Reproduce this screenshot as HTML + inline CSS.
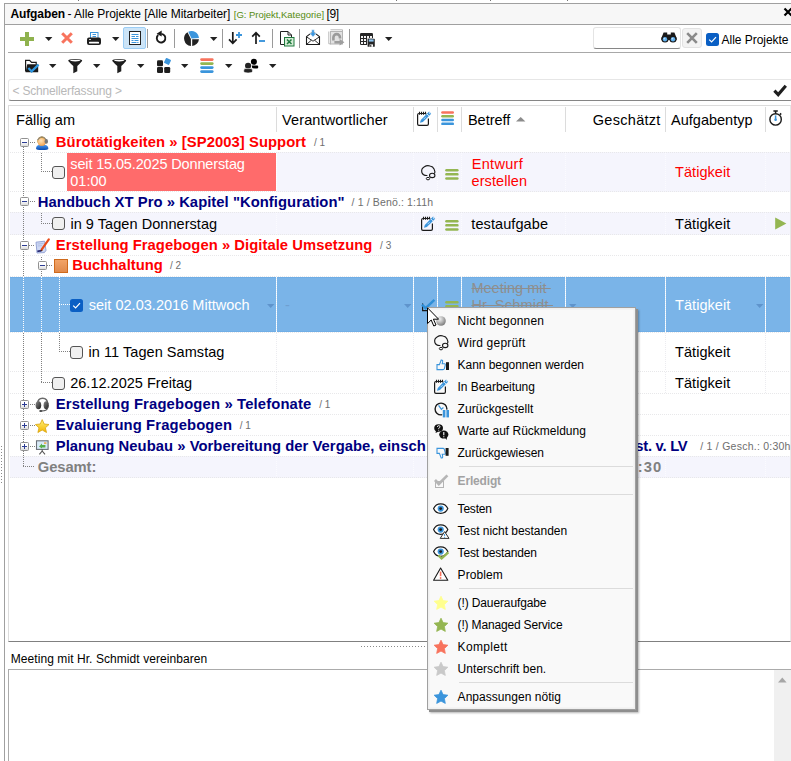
<!DOCTYPE html>
<html>
<head>
<meta charset="utf-8">
<title>Aufgaben</title>
<style>
html,body{margin:0;padding:0;}
body{width:791px;height:761px;background:#fff;overflow:hidden;position:relative;font-family:"Liberation Sans",sans-serif;font-size:14.5px;color:#000;}
.abs{position:absolute;}
.t{position:absolute;white-space:pre;line-height:1;}
svg{position:absolute;overflow:visible;}
.cb{position:absolute;width:11px;height:11px;border:1px solid #555;border-radius:3px;background:#f0f0f0;}
.exp{position:absolute;width:7px;height:7px;border:1px solid #919191;border-radius:1.5px;background:linear-gradient(#fff 40%,#dcdcdc);}
.exp:before{content:"";position:absolute;left:1px;top:3px;width:5px;height:1px;background:#2c3c94;}
.exp.plus:after{content:"";position:absolute;left:3px;top:1px;width:1px;height:5px;background:#2c3c94;}
</style>
</head>
<body>
<div class="abs" style="left:4px;top:3px;width:1px;height:758px;background:#a0a0a0;"></div>
<div class="abs" style="left:4px;top:3px;width:787px;height:1px;background:#a0a0a0;"></div>
<div class="abs" style="left:5px;top:4px;width:786px;height:20px;background:#f7f7f7;"></div>
<div class="abs" style="left:5px;top:24px;width:786px;height:1px;background:#a0a0a0;"></div>
<div class="abs" style="left:8px;top:52px;width:783px;height:1px;background:#a8a8a8;"></div>
<div class="abs" style="left:78px;top:0px;width:1px;height:1px;background:#777;"></div>
<div class="abs" style="left:396px;top:0px;width:1px;height:1px;background:#777;"></div>
<div class="abs" style="left:490px;top:0px;width:1px;height:1px;background:#777;"></div>
<div class="abs" style="left:567px;top:0px;width:1px;height:1px;background:#777;"></div>
<div class="t" style="left:10.4px;top:8px;font-size:12px;font-weight:bold;letter-spacing:-0.089px;">Aufgaben</div>
<div class="t" style="left:67.5px;top:8px;font-size:12px;letter-spacing:-0.038px;">- Alle Projekte [Alle Mitarbeiter]</div>
<div class="t" style="left:233.8px;top:10px;font-size:9.5px;color:#558b10;letter-spacing:-0.028px;">[G: Projekt,Kategorie]</div>
<div class="t" style="left:326.6px;top:8px;font-size:12px;letter-spacing:-0.462px;">[9]</div>
<svg style="left:784px;top:8px" width="8" height="8" viewBox="0 0 8 8"><path d="M0.5 0.5 L7.5 7.5 M7.5 0.5 L0.5 7.5" stroke="#000" stroke-width="2.2"/></svg>
<svg style="left:20px;top:32px" width="14" height="14" viewBox="0 0 14 14"><path d="M5 0h4v5h5v4h-5v5h-4v-5h-5v-4h5z" fill="#8fb24e"/></svg>
<svg style="left:45px;top:37px" width="8" height="4" viewBox="0 0 8 4"><path d="M0 0 H7.4 L3.7 4 Z" fill="#222"/></svg>
<svg style="left:61px;top:32px" width="12" height="12" viewBox="0 0 12 12"><path d="M1.2 1.2 L10.8 10.8 M10.8 1.2 L1.2 10.8" stroke="#f8735d" stroke-width="3" fill="none"/></svg>
<svg style="left:87px;top:32px" width="15" height="14" viewBox="0 0 15 14"><rect x="3.5" y="0.5" width="7.5" height="6" fill="#fff" stroke="#3b95dc" stroke-width="1"/><path d="M5.5 2.5h3.5M5.5 4.5h3.5" stroke="#3b95dc" stroke-width="1"/><rect x="0" y="5.5" width="14" height="7.5" rx="2" fill="#1e1e1e"/><rect x="2" y="9.8" width="10" height="1.8" rx="0.6" fill="#fff"/><rect x="2" y="7" width="2" height="1" fill="#ccc"/></svg>
<svg style="left:112px;top:37px" width="8" height="4" viewBox="0 0 8 4"><path d="M0 0 H7.4 L3.7 4 Z" fill="#222"/></svg>
<div class="abs" style="left:123px;top:27px;width:23px;height:22px;box-sizing:border-box;background:#cce4f7;border:1px solid #9bcdf5;border-radius:2px;"></div>
<svg style="left:129px;top:31px" width="12" height="14" viewBox="0 0 12 14"><rect x="0.5" y="0.5" width="11" height="13" fill="#fff" stroke="#222" stroke-width="1"/><path d="M2.5 3.5h7M2.5 5.5h3.5M7 5.5h2.5M2.5 7.5h7M2.5 9.5h2M5.5 9.5h4M2.5 11.5h5M8.2 11.5h1.3" stroke="#3b95dc" stroke-width="1.2"/></svg>
<div class="abs" style="left:147px;top:29px;width:1px;height:19px;background:#9a9a9a;"></div>
<svg style="left:155px;top:30px" width="12" height="15" viewBox="0 0 12 15"><path d="M3.2 5 A4.3 4.3 0 1 0 6.4 3.9" fill="none" stroke="#1a1a1a" stroke-width="1.9"/><path d="M1.6 3.8 L6.7 0.6 L6.7 6.6 Z" fill="#1a1a1a"/></svg>
<div class="abs" style="left:174px;top:29px;width:1px;height:19px;background:#9a9a9a;"></div>
<svg style="left:184px;top:31px" width="15" height="15" viewBox="-7.5 -7.5 15 15"><path d="M0 0 L-3.2 -6.8 A7.5 7.5 0 0 1 7.45 -0.6 Z" fill="#3b95dc"/><path d="M-0.6 0.4 L-0.6 7.45 A7.5 7.5 0 0 1 -4 -6.3 Z" fill="#222"/><path d="M0.7 0.7 L7.45 0.7 A7.5 7.5 0 0 1 0.7 7.45 Z" fill="#222"/></svg>
<svg style="left:210px;top:37px" width="8" height="4" viewBox="0 0 8 4"><path d="M0 0 H7.4 L3.7 4 Z" fill="#222"/></svg>
<div class="abs" style="left:222px;top:29px;width:1px;height:19px;background:#9a9a9a;"></div>
<svg style="left:228px;top:31px" width="15" height="14" viewBox="0 0 15 14"><path d="M4.8 1 V12 M1 8.3 L4.8 12.3 L8.6 8.3" fill="none" stroke="#1a1a1a" stroke-width="1.7"/><path d="M11 1 V7 M8 4 H14" stroke="#3b95dc" stroke-width="1.8"/></svg>
<svg style="left:251px;top:31px" width="15" height="14" viewBox="0 0 15 14"><path d="M5 13 V2 M1.2 5.7 L5 1.7 L8.8 5.7" fill="none" stroke="#1a1a1a" stroke-width="1.7"/><path d="M8 10 H14" stroke="#3b95dc" stroke-width="1.9"/></svg>
<div class="abs" style="left:272px;top:29px;width:1px;height:19px;background:#9a9a9a;"></div>
<svg style="left:280px;top:31px" width="15" height="16" viewBox="0 0 15 16"><path d="M0.5 0.5 H8 L11.5 4 V13.5 H0.5 Z" fill="#fff" stroke="#222" stroke-width="1"/><path d="M8 0.5 V4 H11.5" fill="none" stroke="#222" stroke-width="1"/><rect x="4.5" y="6.5" width="9.5" height="8.5" fill="#d6ecd6" stroke="#1f7a3e" stroke-width="1"/><path d="M7 8.5 L11.5 13 M11.5 8.5 L7 13" stroke="#1f7a3e" stroke-width="1.5"/></svg>
<div class="abs" style="left:299px;top:29px;width:1px;height:19px;background:#9a9a9a;"></div>
<svg style="left:305px;top:29px" width="16" height="17" viewBox="0 0 16 17"><path d="M1.5 15.5 V7.6 L8 2.6 L14.5 7.6 V15.5 Z" fill="#fff" stroke="#1a1a1a" stroke-width="1.1" stroke-linejoin="round"/><path d="M1.8 8 L8 12.2 L14.2 8 M1.8 15.2 L6.4 11.2 M14.2 15.2 L9.6 11.2" fill="none" stroke="#1a1a1a" stroke-width="0.9"/><path d="M6.7 0.8 H9.3 V4 H11.5 L8 7.9 L4.5 4 H6.7 Z" fill="#3b95dc" stroke="#fff" stroke-width="0.5"/></svg>
<svg style="left:328px;top:29px" width="17" height="17" viewBox="0 0 17 17"><path d="M2.5 0.8 H14.5 V3 M0.8 2.5 V14.8 H3" fill="none" stroke="#b8b8b8" stroke-width="1"/><rect x="2.5" y="2.5" width="12" height="12.5" fill="#e2e2e2" stroke="#b4b4b4" stroke-width="1"/><path d="M5.4 11.6 V8.4 A3.3 3.3 0 0 1 12 8.4 V9.6" fill="none" stroke="#9a9a9a" stroke-width="2.6"/><path d="M6.4 12 H11.6 V10 L16.4 13.2 L11.6 16.4 V14.6 H6.4 Z" fill="#9e9e9e"/></svg>
<div class="abs" style="left:349px;top:29px;width:1px;height:19px;background:#9a9a9a;"></div>
<svg style="left:360px;top:33px" width="16" height="14" viewBox="0 0 16 14"><rect x="0" y="0" width="13" height="12" rx="1.2" fill="#262626"/><path d="M1 3h2v2h-2z M4 3h2v2h-2z M7 3h2v2h-2z M10 3h2v2h-2z M1 6h2v2h-2z M4 6h2v2h-2z M7 6h2v2h-2z M10 6h2v2h-2z M1 9h2v2h-2z M4 9h2v2h-2z M7 9h2v2h-2z M10 9h2v2h-2z " fill="#f4f4f4"/><rect x="7" y="5.2" width="8" height="8.6" fill="#fff"/><rect x="7.6" y="5.8" width="7.2" height="8" rx="0.6" fill="#262626"/><rect x="8.8" y="6.4" width="4.8" height="2.2" fill="#8cc4f0"/><rect x="9.6" y="11.4" width="3.4" height="2.4" fill="#fff"/><rect x="10.2" y="11.8" width="1.1" height="2" fill="#262626"/></svg>
<svg style="left:385px;top:37px" width="8" height="4" viewBox="0 0 8 4"><path d="M0 0 H7.4 L3.7 4 Z" fill="#222"/></svg>
<div class="abs" style="left:593px;top:27px;width:88px;height:22px;box-sizing:border-box;background:#fff;border:1px solid #e4e4e4;border-bottom:1px solid #868686;border-radius:3px;"></div>
<svg style="left:661px;top:32px" width="16" height="11" viewBox="0 0 16 11"><path d="M2.6 0.6 H6.2 V2.4 H9.8 V0.6 H13.4 L15.6 6 V8 H0.4 V6 Z" fill="#1a1a1a"/><circle cx="4" cy="7" r="3.6" fill="#1a1a1a"/><circle cx="12" cy="7" r="3.6" fill="#1a1a1a"/><circle cx="4" cy="7.3" r="2.2" fill="#5fb0ee"/><circle cx="12" cy="7.3" r="2.2" fill="#5fb0ee"/><circle cx="3.4" cy="6.6" r="0.9" fill="#bfe0fa"/><circle cx="11.4" cy="6.6" r="0.9" fill="#bfe0fa"/></svg>
<div class="abs" style="left:682px;top:28px;width:20px;height:20px;box-sizing:border-box;background:#f3f3f3;border:1px solid #e2e2e2;border-radius:3px;"></div>
<svg style="left:686px;top:32px" width="12" height="12" viewBox="0 0 12 12"><path d="M1.2 1.2 L10.8 10.8 M10.8 1.2 L1.2 10.8" stroke="#8a8a8a" stroke-width="2.6" fill="none"/></svg>
<div class="abs" style="left:706px;top:33px;width:13px;height:13px;background:#0a5fc4;border-radius:2.5px;"></div>
<svg style="left:706px;top:33px" width="13" height="13" viewBox="0 0 13 13"><path d="M3.2 6.6 L5.6 9 L10 4.2" fill="none" stroke="#fff" stroke-width="1.2"/></svg>
<div class="t" style="left:721.6px;top:34px;font-size:12px;letter-spacing:-0.038px;">Alle Projekte</div>
<svg style="left:24px;top:59px" width="16" height="15" viewBox="0 0 16 15"><path d="M1.6 12.6 V1.4 H5.6 L7.6 3.4 H12.2 V5.5" fill="none" stroke="#1a1a1a" stroke-width="1.2"/><path d="M3.2 5.2 H14.2 V13.2 H1.6 Z" fill="#1a1a1a"/><path d="M4.4 9 L7.6 12.4 L14.6 5.6" fill="none" stroke="#2f97e0" stroke-width="2.2"/></svg>
<svg style="left:49px;top:64px" width="8" height="4" viewBox="0 0 8 4"><path d="M0 0 H7.4 L3.7 4 Z" fill="#222"/></svg>
<svg style="left:68px;top:59px" width="15" height="15" viewBox="0 0 15 15"><path d="M0.2 1.6 Q0.2 0 7.2 0 Q14.2 0 14.2 1.6 Q14.2 2.6 9.3 7 V12.2 L5.3 14.2 V7 Q0.2 2.6 0.2 1.6 Z" fill="#1e1e1e"/><ellipse cx="7.2" cy="1.6" rx="5.2" ry="0.8" fill="#fff"/></svg>
<svg style="left:93px;top:64px" width="8" height="4" viewBox="0 0 8 4"><path d="M0 0 H7.4 L3.7 4 Z" fill="#222"/></svg>
<svg style="left:112px;top:59px" width="15" height="15" viewBox="0 0 15 15"><path d="M0.2 1.6 Q0.2 0 7.2 0 Q14.2 0 14.2 1.6 Q14.2 2.6 9.3 7 V12.2 L5.3 14.2 V7 Q0.2 2.6 0.2 1.6 Z" fill="#1e1e1e"/><ellipse cx="7.2" cy="1.6" rx="5.2" ry="0.8" fill="#fff"/></svg>
<svg style="left:137px;top:64px" width="8" height="4" viewBox="0 0 8 4"><path d="M0 0 H7.4 L3.7 4 Z" fill="#222"/></svg>
<svg style="left:157px;top:57px" width="16" height="17" viewBox="0 0 16 17"><rect x="0" y="3.2" width="6" height="6" rx="1.3" fill="#1e1e1e"/><rect x="0" y="10" width="6" height="6" rx="1.3" fill="#1e1e1e"/><rect x="7.2" y="10" width="6" height="6" rx="1.3" fill="#1e1e1e"/><rect x="-2.8" y="-2.8" width="5.6" height="5.6" rx="0.8" fill="#3b95dc" transform="translate(10.5 4.4) rotate(25)"/></svg>
<svg style="left:181px;top:64px" width="8" height="4" viewBox="0 0 8 4"><path d="M0 0 H7.4 L3.7 4 Z" fill="#222"/></svg>
<svg style="left:200px;top:58px" width="14" height="15" viewBox="0 0 14 15"><rect x="0.2" y="0.2" width="13.4" height="2.7" rx="1.3" fill="#f8735d"/><rect x="0.2" y="4.2" width="13.4" height="2.7" rx="1.3" fill="#94b652"/><rect x="0.2" y="8.2" width="13.4" height="2.7" rx="1.3" fill="#3b95dc"/><rect x="0.2" y="12.2" width="13.4" height="2.7" rx="1.3" fill="#3b95dc"/></svg>
<svg style="left:225px;top:64px" width="8" height="4" viewBox="0 0 8 4"><path d="M0 0 H7.4 L3.7 4 Z" fill="#222"/></svg>
<svg style="left:243px;top:58px" width="16" height="16" viewBox="0 0 16 16"><circle cx="10.9" cy="3.8" r="3" fill="#000"/><path d="M8.9 7.4 H14.2 Q15.2 7.4 15.2 8.6 V9.4 Q15.2 10.6 12 10.6 Q9 10.6 9 9.6 Z" fill="#000"/><circle cx="5.1" cy="7.8" r="3.6" fill="#fff"/><circle cx="5.1" cy="7.8" r="3.1" fill="#222"/><path d="M0.8 12.4 Q0.8 10.6 2 10.6 H8.2 Q9.4 10.6 9.4 12.4 V13.6 Q9.4 15 5.1 15 Q0.8 15 0.8 13.6 Z" fill="#222" stroke="#fff" stroke-width="0.6"/></svg>
<svg style="left:269px;top:64px" width="8" height="4" viewBox="0 0 8 4"><path d="M0 0 H7.4 L3.7 4 Z" fill="#222"/></svg>
<div class="abs" style="left:8px;top:79px;width:784px;height:22px;box-sizing:border-box;background:#fff;border:1px solid #e6e6e6;border-bottom:1px solid #868686;border-radius:3px 0 0 3px;"></div>
<div class="t" style="left:12.4px;top:85px;font-size:12px;color:#b8b8b8;letter-spacing:-0.165px;">&lt; Schnellerfassung &gt;</div>
<svg style="left:773px;top:84px" width="14" height="13" viewBox="0 0 14 13"><path d="M1.4 6.6 L5.2 10.6 L12.8 1.8" fill="none" stroke="#1e1e1e" stroke-width="3.1"/></svg>
<div class="abs" style="left:8px;top:105px;width:783px;height:537px;box-sizing:border-box;border:1px solid #dcdcdc;border-right-color:#e8e8e8;border-bottom-color:#808080;"></div>
<div class="abs" style="left:276px;top:107px;width:1px;height:25px;background:#dcdcdc;"></div>
<div class="abs" style="left:413px;top:107px;width:1px;height:25px;background:#dcdcdc;"></div>
<div class="abs" style="left:437px;top:107px;width:1px;height:25px;background:#dcdcdc;"></div>
<div class="abs" style="left:461px;top:107px;width:1px;height:25px;background:#dcdcdc;"></div>
<div class="abs" style="left:565px;top:107px;width:1px;height:25px;background:#dcdcdc;"></div>
<div class="abs" style="left:665px;top:107px;width:1px;height:25px;background:#dcdcdc;"></div>
<div class="abs" style="left:765px;top:107px;width:1px;height:25px;background:#dcdcdc;"></div>
<div class="t" style="left:16.1px;top:113px;font-size:14.5px;letter-spacing:0.008px;">Fällig am</div>
<div class="t" style="left:282.1px;top:113px;font-size:14.5px;letter-spacing:0.108px;">Verantwortlicher</div>
<div class="t" style="left:467.9px;top:113px;font-size:14.5px;letter-spacing:0.007px;">Betreff</div>
<svg style="left:516px;top:117px" width="10" height="5" viewBox="0 0 10 5"><path d="M0 4.6 L4.7 0 L9.4 4.6 Z" fill="#8c8c8c"/></svg>
<div class="t" style="left:592.8px;top:113px;font-size:14.5px;letter-spacing:0.289px;">Geschätzt</div>
<div class="t" style="left:671.1px;top:113px;font-size:14.5px;">Aufgabentyp</div>
<svg style="left:417px;top:111px" width="15" height="15" viewBox="0 0 15 15"><path d="M9.6 2.5 H2 Q0.6 2.5 0.6 4 V13 Q0.6 14.4 2 14.4 H10 Q11.4 14.4 11.4 13 V7.4" fill="#fff" stroke="#1a1a1a" stroke-width="1.2"/><path d="M2.5 0.7V3.8M4.5 0.7V3.8M6.5 0.7V3.8M8.5 0.7V3.8" stroke="#1a1a1a" stroke-width="1.1"/><path d="M2.4 12.4 L3.5 8.6 L12.1 0 L14.8 2.7 L6.2 11.3 Z" fill="#fff"/><path d="M3 11.8 L3.8 8.9 L12.1 0.6 L14.2 2.7 L5.9 11 Z" fill="#3b95dc"/><path d="M9.9 2.9 L11.9 4.9" stroke="#fff" stroke-width="0.8"/><path d="M6.6 8.2 L8.6 6.2" stroke="#d4e8f8" stroke-width="0.8"/><rect x="12" y="1.4" width="1.4" height="1.4" fill="#d4e8f8" transform="rotate(45 12.7 2.1)"/></svg>
<svg style="left:441px;top:111px" width="14" height="15" viewBox="0 0 14 15"><rect x="0.2" y="0.2" width="12.8" height="2.5" rx="1.2" fill="#f8735d"/><rect x="0.2" y="4" width="12.8" height="2.5" rx="1.2" fill="#94b652"/><rect x="0.2" y="7.8" width="12.8" height="2.5" rx="1.2" fill="#3b95dc"/><rect x="0.2" y="11.6" width="12.8" height="2.5" rx="1.2" fill="#3b95dc"/></svg>
<svg style="left:769px;top:110px" width="14" height="16" viewBox="0 0 14 16"><circle cx="6.6" cy="9.4" r="5.7" fill="#fff" stroke="#1a1a1a" stroke-width="1.4"/><path d="M4.4 0.9 H8.8 M6.6 1 V3.6 M11 3.4 L12.2 4.6" stroke="#1a1a1a" stroke-width="1.5" fill="none"/><path d="M6.6 5.4 V9.6" stroke="#3b95dc" stroke-width="1.5"/><circle cx="6.6" cy="9.8" r="1.3" fill="#3b95dc"/></svg>
<div class="abs" style="left:277px;top:152px;width:513px;height:40px;background:#f5f5fd;"></div>
<div class="abs" style="left:10px;top:212px;width:780px;height:23px;background:#f5f5fd;"></div>
<div class="abs" style="left:10px;top:277px;width:780px;height:55px;box-sizing:border-box;background:#7ab4e8;border-top:1px solid #70aee6;border-bottom:1px solid #70aee6;"></div>
<div class="abs" style="left:10px;top:456px;width:780px;height:22px;background:#f5f5fd;"></div>
<div class="abs" style="left:10px;top:152px;width:780px;height:1px;background:repeating-linear-gradient(to right,#e8e8ea 0 1px,transparent 1px 2px);"></div>
<div class="abs" style="left:10px;top:191px;width:780px;height:1px;background:repeating-linear-gradient(to right,#e8e8ea 0 1px,transparent 1px 2px);"></div>
<div class="abs" style="left:10px;top:212px;width:780px;height:1px;background:repeating-linear-gradient(to right,#e8e8ea 0 1px,transparent 1px 2px);"></div>
<div class="abs" style="left:10px;top:234px;width:780px;height:1px;background:repeating-linear-gradient(to right,#e8e8ea 0 1px,transparent 1px 2px);"></div>
<div class="abs" style="left:10px;top:255px;width:780px;height:1px;background:repeating-linear-gradient(to right,#e8e8ea 0 1px,transparent 1px 2px);"></div>
<div class="abs" style="left:10px;top:276px;width:780px;height:1px;background:repeating-linear-gradient(to right,#e8e8ea 0 1px,transparent 1px 2px);"></div>
<div class="abs" style="left:10px;top:332px;width:780px;height:1px;background:repeating-linear-gradient(to right,#e8e8ea 0 1px,transparent 1px 2px);"></div>
<div class="abs" style="left:10px;top:371px;width:780px;height:1px;background:repeating-linear-gradient(to right,#e8e8ea 0 1px,transparent 1px 2px);"></div>
<div class="abs" style="left:10px;top:393px;width:780px;height:1px;background:repeating-linear-gradient(to right,#e8e8ea 0 1px,transparent 1px 2px);"></div>
<div class="abs" style="left:10px;top:414px;width:780px;height:1px;background:repeating-linear-gradient(to right,#e8e8ea 0 1px,transparent 1px 2px);"></div>
<div class="abs" style="left:10px;top:435px;width:780px;height:1px;background:repeating-linear-gradient(to right,#e8e8ea 0 1px,transparent 1px 2px);"></div>
<div class="abs" style="left:10px;top:456px;width:780px;height:1px;background:repeating-linear-gradient(to right,#e8e8ea 0 1px,transparent 1px 2px);"></div>
<div class="abs" style="left:10px;top:477px;width:780px;height:1px;background:repeating-linear-gradient(to right,#e8e8ea 0 1px,transparent 1px 2px);"></div>
<div class="abs" style="left:276px;top:153px;width:1px;height:38px;background:repeating-linear-gradient(to bottom,#fbfbff 0 1px,transparent 1px 2px);"></div>
<div class="abs" style="left:413px;top:153px;width:1px;height:38px;background:repeating-linear-gradient(to bottom,#fbfbff 0 1px,transparent 1px 2px);"></div>
<div class="abs" style="left:437px;top:153px;width:1px;height:38px;background:repeating-linear-gradient(to bottom,#fbfbff 0 1px,transparent 1px 2px);"></div>
<div class="abs" style="left:461px;top:153px;width:1px;height:38px;background:repeating-linear-gradient(to bottom,#fbfbff 0 1px,transparent 1px 2px);"></div>
<div class="abs" style="left:565px;top:153px;width:1px;height:38px;background:repeating-linear-gradient(to bottom,#fbfbff 0 1px,transparent 1px 2px);"></div>
<div class="abs" style="left:665px;top:153px;width:1px;height:38px;background:repeating-linear-gradient(to bottom,#fbfbff 0 1px,transparent 1px 2px);"></div>
<div class="abs" style="left:765px;top:153px;width:1px;height:38px;background:repeating-linear-gradient(to bottom,#fbfbff 0 1px,transparent 1px 2px);"></div>
<div class="abs" style="left:276px;top:213px;width:1px;height:21px;background:repeating-linear-gradient(to bottom,#fbfbff 0 1px,transparent 1px 2px);"></div>
<div class="abs" style="left:413px;top:213px;width:1px;height:21px;background:repeating-linear-gradient(to bottom,#fbfbff 0 1px,transparent 1px 2px);"></div>
<div class="abs" style="left:437px;top:213px;width:1px;height:21px;background:repeating-linear-gradient(to bottom,#fbfbff 0 1px,transparent 1px 2px);"></div>
<div class="abs" style="left:461px;top:213px;width:1px;height:21px;background:repeating-linear-gradient(to bottom,#fbfbff 0 1px,transparent 1px 2px);"></div>
<div class="abs" style="left:565px;top:213px;width:1px;height:21px;background:repeating-linear-gradient(to bottom,#fbfbff 0 1px,transparent 1px 2px);"></div>
<div class="abs" style="left:665px;top:213px;width:1px;height:21px;background:repeating-linear-gradient(to bottom,#fbfbff 0 1px,transparent 1px 2px);"></div>
<div class="abs" style="left:765px;top:213px;width:1px;height:21px;background:repeating-linear-gradient(to bottom,#fbfbff 0 1px,transparent 1px 2px);"></div>
<div class="abs" style="left:276px;top:277px;width:1px;height:55px;background:repeating-linear-gradient(to bottom,#fff 0 1px,#e4f0fb 1px 2px);"></div>
<div class="abs" style="left:413px;top:277px;width:1px;height:55px;background:repeating-linear-gradient(to bottom,#fff 0 1px,#e4f0fb 1px 2px);"></div>
<div class="abs" style="left:437px;top:277px;width:1px;height:55px;background:repeating-linear-gradient(to bottom,#fff 0 1px,#e4f0fb 1px 2px);"></div>
<div class="abs" style="left:461px;top:277px;width:1px;height:55px;background:repeating-linear-gradient(to bottom,#fff 0 1px,#e4f0fb 1px 2px);"></div>
<div class="abs" style="left:565px;top:277px;width:1px;height:55px;background:repeating-linear-gradient(to bottom,#fff 0 1px,#e4f0fb 1px 2px);"></div>
<div class="abs" style="left:665px;top:277px;width:1px;height:55px;background:repeating-linear-gradient(to bottom,#fff 0 1px,#e4f0fb 1px 2px);"></div>
<div class="abs" style="left:765px;top:277px;width:1px;height:55px;background:repeating-linear-gradient(to bottom,#fff 0 1px,#e4f0fb 1px 2px);"></div>
<div class="abs" style="left:276px;top:333px;width:1px;height:38px;background:repeating-linear-gradient(to bottom,#ececf0 0 1px,transparent 1px 2px);"></div>
<div class="abs" style="left:413px;top:333px;width:1px;height:38px;background:repeating-linear-gradient(to bottom,#ececf0 0 1px,transparent 1px 2px);"></div>
<div class="abs" style="left:437px;top:333px;width:1px;height:38px;background:repeating-linear-gradient(to bottom,#ececf0 0 1px,transparent 1px 2px);"></div>
<div class="abs" style="left:461px;top:333px;width:1px;height:38px;background:repeating-linear-gradient(to bottom,#ececf0 0 1px,transparent 1px 2px);"></div>
<div class="abs" style="left:565px;top:333px;width:1px;height:38px;background:repeating-linear-gradient(to bottom,#ececf0 0 1px,transparent 1px 2px);"></div>
<div class="abs" style="left:665px;top:333px;width:1px;height:38px;background:repeating-linear-gradient(to bottom,#ececf0 0 1px,transparent 1px 2px);"></div>
<div class="abs" style="left:765px;top:333px;width:1px;height:38px;background:repeating-linear-gradient(to bottom,#ececf0 0 1px,transparent 1px 2px);"></div>
<div class="abs" style="left:276px;top:372px;width:1px;height:21px;background:repeating-linear-gradient(to bottom,#ececf0 0 1px,transparent 1px 2px);"></div>
<div class="abs" style="left:413px;top:372px;width:1px;height:21px;background:repeating-linear-gradient(to bottom,#ececf0 0 1px,transparent 1px 2px);"></div>
<div class="abs" style="left:437px;top:372px;width:1px;height:21px;background:repeating-linear-gradient(to bottom,#ececf0 0 1px,transparent 1px 2px);"></div>
<div class="abs" style="left:461px;top:372px;width:1px;height:21px;background:repeating-linear-gradient(to bottom,#ececf0 0 1px,transparent 1px 2px);"></div>
<div class="abs" style="left:565px;top:372px;width:1px;height:21px;background:repeating-linear-gradient(to bottom,#ececf0 0 1px,transparent 1px 2px);"></div>
<div class="abs" style="left:665px;top:372px;width:1px;height:21px;background:repeating-linear-gradient(to bottom,#ececf0 0 1px,transparent 1px 2px);"></div>
<div class="abs" style="left:765px;top:372px;width:1px;height:21px;background:repeating-linear-gradient(to bottom,#ececf0 0 1px,transparent 1px 2px);"></div>
<div class="abs" style="left:276px;top:457px;width:1px;height:20px;background:repeating-linear-gradient(to bottom,#fbfbff 0 1px,transparent 1px 2px);"></div>
<div class="abs" style="left:413px;top:457px;width:1px;height:20px;background:repeating-linear-gradient(to bottom,#fbfbff 0 1px,transparent 1px 2px);"></div>
<div class="abs" style="left:437px;top:457px;width:1px;height:20px;background:repeating-linear-gradient(to bottom,#fbfbff 0 1px,transparent 1px 2px);"></div>
<div class="abs" style="left:461px;top:457px;width:1px;height:20px;background:repeating-linear-gradient(to bottom,#fbfbff 0 1px,transparent 1px 2px);"></div>
<div class="abs" style="left:565px;top:457px;width:1px;height:20px;background:repeating-linear-gradient(to bottom,#fbfbff 0 1px,transparent 1px 2px);"></div>
<div class="abs" style="left:665px;top:457px;width:1px;height:20px;background:repeating-linear-gradient(to bottom,#fbfbff 0 1px,transparent 1px 2px);"></div>
<div class="abs" style="left:765px;top:457px;width:1px;height:20px;background:repeating-linear-gradient(to bottom,#fbfbff 0 1px,transparent 1px 2px);"></div>
<div class="abs" style="left:23px;top:147px;width:1px;height:320px;background:repeating-linear-gradient(to bottom,#808080 0 1px,transparent 1px 2px);"></div>
<div class="abs" style="left:23px;top:466px;width:11px;height:1px;background:repeating-linear-gradient(to right,#808080 0 1px,transparent 1px 2px);"></div>
<div class="exp" style="left:20px;top:138px"></div>
<div class="abs" style="left:30px;top:142px;width:5px;height:1px;background:repeating-linear-gradient(to right,#808080 0 1px,transparent 1px 2px);"></div>
<svg style="left:36px;top:135px" width="13" height="15" viewBox="0 0 13 15"><defs><linearGradient id="pb" x1="0" y1="0" x2="0" y2="1"><stop offset="0" stop-color="#4a9af4"/><stop offset="1" stop-color="#0a4cb0"/></linearGradient><radialGradient id="pf" cx="0.4" cy="0.35" r="0.7"><stop offset="0" stop-color="#ffe4b8"/><stop offset="1" stop-color="#f0a050"/></radialGradient></defs><path d="M0 13.4 Q0 9.8 6 9.6 Q12.4 9.8 12.4 13.4 Q12.4 15 6.2 15 Q0 15 0 13.4 Z" fill="url(#pb)"/><circle cx="5.8" cy="6" r="4.5" fill="#c48a18"/><circle cx="5.8" cy="6.9" r="3.9" fill="url(#pf)"/><path d="M1.6 5 Q5.8 -1.5 10.4 5" fill="none" stroke="#8a8a8a" stroke-width="1.2"/><ellipse cx="10.3" cy="6.4" rx="1.7" ry="2.4" fill="#777"/></svg>
<div class="t" style="left:55.8px;top:135px;font-size:14.8px;font-weight:bold;color:#ff0000;letter-spacing:0.058px;">Bürotätigkeiten » [SP2003] Support</div>
<div class="t" style="left:313.9px;top:138px;font-size:10px;color:#6e6e6e;">/ 1</div>
<div class="abs" style="left:41px;top:153px;width:1px;height:19px;background:repeating-linear-gradient(to bottom,#808080 0 1px,transparent 1px 2px);"></div>
<div class="abs" style="left:41px;top:171px;width:11px;height:1px;background:repeating-linear-gradient(to right,#808080 0 1px,transparent 1px 2px);"></div>
<div class="cb" style="left:52px;top:166px"></div>
<div class="abs" style="left:67px;top:153px;width:209px;height:38px;background:#ff6b6b;"></div>
<div class="t" style="left:70.3px;top:157px;font-size:14.5px;color:#fff;letter-spacing:-0.142px;">seit 15.05.2025 Donnerstag</div>
<div class="t" style="left:70.3px;top:174px;font-size:14.5px;color:#fff;">01:00</div>
<svg style="left:421px;top:165px" width="15" height="16" viewBox="0 0 15 16"><path d="M6.4 10.5 Q2 10.8 0.8 7.2 Q0 3.6 3.4 1.8 Q6 0 9 1 Q12 1.4 13.2 4.2 Q14.4 6.8 13.4 8.6" fill="none" stroke="#1a1a1a" stroke-width="1.15"/><ellipse cx="11.2" cy="10.4" rx="2.7" ry="2.2" fill="#f5f5fd" stroke="#1a1a1a" stroke-width="1.1"/><ellipse cx="7" cy="13.6" rx="1.7" ry="1.25" fill="#f5f5fd" stroke="#1a1a1a" stroke-width="1"/></svg>
<svg style="left:445px;top:169px" width="14" height="11" viewBox="0 0 14 11"><rect x="0.2" y="0" width="13.4" height="2.5" rx="1.2" fill="#94b652"/><rect x="0.2" y="4.1" width="13.4" height="2.5" rx="1.2" fill="#94b652"/><rect x="0.2" y="8.2" width="13.4" height="2.5" rx="1.2" fill="#94b652"/></svg>
<div class="t" style="left:471.8px;top:157px;font-size:14.5px;color:#ff0000;letter-spacing:0.287px;">Entwurf</div>
<div class="t" style="left:471.5px;top:174px;font-size:14.5px;color:#ff0000;letter-spacing:0.085px;">erstellen</div>
<div class="t" style="left:675.1px;top:165px;font-size:14.5px;color:#ff0000;letter-spacing:0.048px;">Tätigkeit</div>
<div class="exp" style="left:20px;top:197px"></div>
<div class="abs" style="left:30px;top:201px;width:5px;height:1px;background:repeating-linear-gradient(to right,#808080 0 1px,transparent 1px 2px);"></div>
<div class="t" style="left:37.8px;top:195px;font-size:14.8px;font-weight:bold;color:#000080;letter-spacing:0.042px;">Handbuch XT Pro » Kapitel "Konfiguration"</div>
<div class="t" style="left:351.6px;top:197px;font-size:10.5px;color:#6e6e6e;letter-spacing:0.138px;">/ 1 / Benö.: 1:11h</div>
<div class="abs" style="left:41px;top:213px;width:1px;height:11px;background:repeating-linear-gradient(to bottom,#808080 0 1px,transparent 1px 2px);"></div>
<div class="abs" style="left:41px;top:223px;width:11px;height:1px;background:repeating-linear-gradient(to right,#808080 0 1px,transparent 1px 2px);"></div>
<div class="cb" style="left:52px;top:217px"></div>
<div class="t" style="left:70.4px;top:217px;font-size:14.5px;letter-spacing:0.052px;">in 9 Tagen Donnerstag</div>
<svg style="left:421px;top:216px" width="15" height="15" viewBox="0 0 15 15"><path d="M9.6 2.5 H2 Q0.6 2.5 0.6 4 V13 Q0.6 14.4 2 14.4 H10 Q11.4 14.4 11.4 13 V7.4" fill="#f5f5fd" stroke="#1a1a1a" stroke-width="1.2"/><path d="M2.5 0.7V3.8M4.5 0.7V3.8M6.5 0.7V3.8M8.5 0.7V3.8" stroke="#1a1a1a" stroke-width="1.1"/><path d="M2.4 12.4 L3.5 8.6 L12.1 0 L14.8 2.7 L6.2 11.3 Z" fill="#f5f5fd"/><path d="M3 11.8 L3.8 8.9 L12.1 0.6 L14.2 2.7 L5.9 11 Z" fill="#3b95dc"/><path d="M9.9 2.9 L11.9 4.9" stroke="#f5f5fd" stroke-width="0.8"/><path d="M6.6 8.2 L8.6 6.2" stroke="#d4e8f8" stroke-width="0.8"/><rect x="12" y="1.4" width="1.4" height="1.4" fill="#d4e8f8" transform="rotate(45 12.7 2.1)"/></svg>
<svg style="left:445px;top:220px" width="14" height="11" viewBox="0 0 14 11"><rect x="0.2" y="0" width="13.4" height="2.5" rx="1.2" fill="#94b652"/><rect x="0.2" y="4.1" width="13.4" height="2.5" rx="1.2" fill="#94b652"/><rect x="0.2" y="8.2" width="13.4" height="2.5" rx="1.2" fill="#94b652"/></svg>
<div class="t" style="left:471.3px;top:217px;font-size:14.5px;letter-spacing:0.090px;">testaufgabe</div>
<div class="t" style="left:675.1px;top:217px;font-size:14.5px;letter-spacing:0.048px;">Tätigkeit</div>
<svg style="left:775px;top:217px" width="12" height="13" viewBox="0 0 12 13"><path d="M0.2 0.4 L11.4 6.4 L0.2 12.6 Z" fill="#94b652"/></svg>
<div class="exp" style="left:20px;top:241px"></div>
<div class="abs" style="left:29px;top:245px;width:5px;height:1px;background:repeating-linear-gradient(to right,#808080 0 1px,transparent 1px 2px);"></div>
<svg style="left:35px;top:239px" width="15" height="15" viewBox="0 0 15 15"><path d="M1 3.2 L9.6 2.2 L11 11.4 L9.4 13.6 L2 14 Z" fill="#cdd8f4" stroke="#8c9cd0" stroke-width="0.9"/><path d="M2.6 5 L8.6 4.4 M2.8 7 L7 6.6" stroke="#aab6e0" stroke-width="0.8"/><path d="M2.4 12.2 L6.4 11.8" stroke="#101060" stroke-width="1.5"/><path d="M13.8 0.4 L6.6 10.6" stroke="#e84a1a" stroke-width="2.2" stroke-linecap="round"/><path d="M6.6 10.6 L5.6 12.4 L7.6 11.4 Z" fill="#402010"/></svg>
<div class="t" style="left:55.8px;top:238px;font-size:14.8px;font-weight:bold;color:#ff0000;letter-spacing:0.040px;">Erstellung Fragebogen » Digitale Umsetzung</div>
<div class="t" style="left:380.1px;top:241px;font-size:10px;color:#6e6e6e;">/ 3</div>
<div class="abs" style="left:41px;top:257px;width:1px;height:126px;background:repeating-linear-gradient(to bottom,#808080 0 1px,transparent 1px 2px);"></div>
<div class="abs" style="left:41px;top:382px;width:11px;height:1px;background:repeating-linear-gradient(to right,#808080 0 1px,transparent 1px 2px);"></div>
<div class="exp" style="left:38px;top:261px"></div>
<div class="abs" style="left:47px;top:265px;width:5px;height:1px;background:repeating-linear-gradient(to right,#808080 0 1px,transparent 1px 2px);"></div>
<div class="abs" style="left:54px;top:259px;width:14px;height:14px;box-sizing:border-box;border:1px solid #cf6a1c;background:linear-gradient(#f2a468,#e08a4c);"></div>
<div class="t" style="left:72.2px;top:258px;font-size:14.8px;font-weight:bold;color:#ff0000;letter-spacing:0.031px;">Buchhaltung</div>
<div class="t" style="left:169.9px;top:261px;font-size:10px;color:#6e6e6e;">/ 2</div>
<div class="abs" style="left:59px;top:277px;width:1px;height:75px;background:repeating-linear-gradient(to bottom,#808080 0 1px,transparent 1px 2px);"></div>
<div class="abs" style="left:59px;top:351px;width:11px;height:1px;background:repeating-linear-gradient(to right,#808080 0 1px,transparent 1px 2px);"></div>
<div class="abs" style="left:23px;top:277px;width:1px;height:55px;background:repeating-linear-gradient(to bottom,#fff 0 1px,transparent 1px 2px);"></div>
<div class="abs" style="left:41px;top:277px;width:1px;height:55px;background:repeating-linear-gradient(to bottom,#fff 0 1px,transparent 1px 2px);"></div>
<div class="abs" style="left:59px;top:277px;width:1px;height:55px;background:repeating-linear-gradient(to bottom,#fff 0 1px,transparent 1px 2px);"></div>
<div class="abs" style="left:59px;top:304px;width:11px;height:1px;background:repeating-linear-gradient(to right,#fff 0 1px,transparent 1px 2px);"></div>
<div class="abs" style="left:70px;top:299px;width:13px;height:13px;background:#0a5fc4;border-radius:2.5px;"></div>
<svg style="left:70px;top:299px" width="13" height="13" viewBox="0 0 13 13"><path d="M3.2 6.6 L5.6 9 L10 4.2" fill="none" stroke="#fff" stroke-width="1.2"/></svg>
<div class="t" style="left:88.7px;top:298px;font-size:14.5px;color:#fff;letter-spacing:0.026px;">seit 02.03.2016 Mittwoch</div>
<div class="t" style="left:285.1px;top:298px;font-size:14.5px;color:#6f9fd0;">-</div>
<div class="t" style="left:675.1px;top:298px;font-size:14.5px;color:#fff;letter-spacing:0.048px;">Tätigkeit</div>
<svg style="left:267px;top:304px" width="8" height="4" viewBox="0 0 8 4"><path d="M0 0 H7.4 L3.7 4 Z" fill="#5f94cc"/></svg>
<svg style="left:404px;top:304px" width="8" height="4" viewBox="0 0 8 4"><path d="M0 0 H7.4 L3.7 4 Z" fill="#5f94cc"/></svg>
<svg style="left:569px;top:304px" width="8" height="4" viewBox="0 0 8 4"><path d="M0 0 H7.4 L3.7 4 Z" fill="#5f94cc"/></svg>
<svg style="left:756px;top:304px" width="8" height="4" viewBox="0 0 8 4"><path d="M0 0 H7.4 L3.7 4 Z" fill="#5f94cc"/></svg>
<div class="t" style="left:471.4px;top:281px;font-size:14.5px;color:#8e8e8e;letter-spacing:0.028px;text-decoration:line-through;">Meeting mit </div>
<div class="t" style="left:471.4px;top:298px;font-size:14.5px;color:#8e8e8e;letter-spacing:0.211px;text-decoration:line-through;">Hr. Schmidt </div>
<svg style="left:421px;top:299px" width="15" height="13" viewBox="0 0 15 13"><path d="M1.6 4.6 V11.6 H10" fill="none" stroke="#1a1a1a" stroke-width="1.2"/><path d="M1 5.6 L4.6 9.2 L13.4 0.8" fill="none" stroke="#2f8fd8" stroke-width="2.4"/></svg>
<svg style="left:445px;top:301px" width="14" height="11" viewBox="0 0 14 11"><rect x="0.2" y="0" width="13.4" height="2.5" rx="1.2" fill="#94b652"/><rect x="0.2" y="4.1" width="13.4" height="2.5" rx="1.2" fill="#94b652"/><rect x="0.2" y="8.2" width="13.4" height="2.5" rx="1.2" fill="#94b652"/></svg>
<div class="cb" style="left:70px;top:346px"></div>
<div class="t" style="left:88.6px;top:345px;font-size:14.5px;letter-spacing:0.050px;">in 11 Tagen Samstag</div>
<div class="t" style="left:675.1px;top:345px;font-size:14.5px;letter-spacing:0.048px;">Tätigkeit</div>
<div class="cb" style="left:52px;top:377px"></div>
<div class="t" style="left:70.2px;top:376px;font-size:14.5px;letter-spacing:0.015px;">26.12.2025 Freitag</div>
<div class="t" style="left:675.1px;top:376px;font-size:14.5px;letter-spacing:0.048px;">Tätigkeit</div>
<div class="exp plus" style="left:20px;top:400px"></div>
<div class="abs" style="left:30px;top:404px;width:5px;height:1px;background:repeating-linear-gradient(to right,#808080 0 1px,transparent 1px 2px);"></div>
<svg style="left:35px;top:397px" width="15" height="16" viewBox="0 0 15 16"><defs><linearGradient id="hs" x1="0" y1="0" x2="1" y2="1"><stop offset="0" stop-color="#8a8a8a"/><stop offset="1" stop-color="#1a1a1a"/></linearGradient></defs><path d="M2.6 7 Q2.6 1.2 7.6 1.2 Q12.6 1.2 12.6 7" fill="none" stroke="#6a6a6a" stroke-width="1.6"/><ellipse cx="3.4" cy="8.2" rx="2.8" ry="4" fill="url(#hs)"/><ellipse cx="11.2" cy="8.2" rx="2.6" ry="4" fill="url(#hs)"/><path d="M12.6 10.6 Q12.6 14 6.4 14" fill="none" stroke="#555" stroke-width="1.1"/><ellipse cx="5.8" cy="14" rx="1.6" ry="1" fill="#444"/></svg>
<div class="t" style="left:55.8px;top:397px;font-size:14.8px;font-weight:bold;color:#000080;letter-spacing:0.152px;">Erstellung Fragebogen » Telefonate</div>
<div class="t" style="left:319.2px;top:400px;font-size:10px;color:#6e6e6e;">/ 1</div>
<div class="exp plus" style="left:20px;top:421px"></div>
<div class="abs" style="left:30px;top:425px;width:5px;height:1px;background:repeating-linear-gradient(to right,#808080 0 1px,transparent 1px 2px);"></div>
<svg style="left:35px;top:419px" width="15" height="14" viewBox="0 0 15 14"><defs><linearGradient id="sg" x1="0" y1="0" x2="0" y2="1"><stop offset="0" stop-color="#fff27a"/><stop offset="1" stop-color="#f4b400"/></linearGradient></defs><path d="M7.2 0.6 L9.2 5 L14 5.5 L10.4 8.8 L11.5 13.5 L7.2 11 L2.9 13.5 L4 8.8 L0.4 5.5 L5.2 5 Z" fill="url(#sg)" stroke="#d8a410" stroke-width="0.8" stroke-linejoin="round"/></svg>
<div class="t" style="left:55.8px;top:418px;font-size:14.8px;font-weight:bold;color:#000080;letter-spacing:0.126px;">Evaluierung Fragebogen</div>
<div class="t" style="left:239.8px;top:421px;font-size:10px;color:#6e6e6e;">/ 1</div>
<div class="exp plus" style="left:20px;top:442px"></div>
<div class="abs" style="left:30px;top:446px;width:5px;height:1px;background:repeating-linear-gradient(to right,#808080 0 1px,transparent 1px 2px);"></div>
<svg style="left:36px;top:440px" width="13" height="15" viewBox="0 0 13 15"><rect x="0.5" y="0.8" width="11.6" height="8.6" fill="#d8eaf8" stroke="#6a7078" stroke-width="1.1"/><path d="M3 6.6 L6 3.4 L6 5 H9.4 V7.6 H6 V8.6 Z" fill="#58b04a"/><path d="M8 2.4 H10.4 V3.8 H8 Z" fill="#f0a030"/><path d="M6.2 9.6 V12 M6.2 11 L3.4 14.4 M6.2 11 L9 14.4" stroke="#555" stroke-width="1.1" fill="none"/></svg>
<div class="t" style="left:55.8px;top:439px;font-size:14.8px;font-weight:bold;color:#000080;letter-spacing:0.038px;">Planung Neubau » Vorbereitung der Vergabe, einsch</div>
<div class="t" style="left:635.3px;top:439px;font-size:14.8px;font-weight:bold;color:#000080;letter-spacing:-0.265px;">st. v. LV</div>
<div class="t" style="left:700.3px;top:441px;font-size:10.5px;color:#6e6e6e;letter-spacing:0.241px;">/ 1 / Gesch.: 0:30h</div>
<div class="t" style="left:37.8px;top:460px;font-size:14.8px;font-weight:bold;color:#808080;letter-spacing:-0.115px;">Gesamt:</div>
<div class="t" style="left:628.5px;top:460px;font-size:14.8px;font-weight:bold;color:#808080;letter-spacing:1.001px;">0:30</div>
<div class="abs" style="left:1px;top:446px;width:1px;height:37px;background:repeating-linear-gradient(to bottom,#8a8a8a 0 1px,transparent 1px 3px);"></div>
<div class="abs" style="left:361px;top:646px;width:70px;height:1px;background:repeating-linear-gradient(to right,#8a8a8a 0 1px,transparent 1px 3px);"></div>
<div class="t" style="left:10.8px;top:653px;font-size:12px;letter-spacing:0.068px;">Meeting mit Hr. Schmidt vereinbaren</div>
<div class="abs" style="left:8px;top:669px;width:783px;height:100px;box-sizing:border-box;border:1px solid #ababab;background:#fff;"></div>
<div class="abs" style="left:774px;top:670px;width:17px;height:91px;background:#f0f0f0;"></div>
<svg style="left:778px;top:677px" width="9" height="6" viewBox="0 0 9 6"><path d="M0 5.4 L4.3 0.4 L8.6 5.4 Z" fill="#a6a6a6"/></svg>
<div class="abs" style="left:427px;top:307px;width:209px;height:403px;box-sizing:border-box;background:#f9f9f9;border:1px solid #a0a0a0;box-shadow:inset 0 0 0 1.5px #f0f0f0,2px 2px 0 0 #8e8e8e,3px 3px 2px rgba(0,0,0,0.3);"></div>
<svg style="left:436px;top:316px" width="10" height="10" viewBox="0 0 10 10"><defs><radialGradient id="gb" cx="0.35" cy="0.3" r="0.8"><stop offset="0" stop-color="#f4f4f4"/><stop offset="0.5" stop-color="#b4b4b4"/><stop offset="1" stop-color="#707070"/></radialGradient></defs><circle cx="5" cy="5" r="4.8" fill="url(#gb)"/></svg>
<div class="t" style="left:457.6px;top:315px;font-size:12px;letter-spacing:0.180px;">Nicht begonnen</div>
<svg style="left:434px;top:335px" width="15" height="16" viewBox="0 0 15 16"><path d="M6.4 10.5 Q2 10.8 0.8 7.2 Q0 3.6 3.4 1.8 Q6 0 9 1 Q12 1.4 13.2 4.2 Q14.4 6.8 13.4 8.6" fill="none" stroke="#1a1a1a" stroke-width="1.15"/><ellipse cx="11.2" cy="10.4" rx="2.7" ry="2.2" fill="#f9f9f9" stroke="#1a1a1a" stroke-width="1.1"/><ellipse cx="7" cy="13.6" rx="1.7" ry="1.25" fill="#f9f9f9" stroke="#1a1a1a" stroke-width="1"/></svg>
<div class="t" style="left:457.6px;top:337px;font-size:12px;letter-spacing:0.206px;">Wird geprüft</div>
<svg style="left:436px;top:359px" width="14" height="12" viewBox="0 0 14 12"><path d="M1 5.6 H3.4 L5.2 1 Q7 0.8 6.6 3 L6.2 4.8 H8.6 Q9.6 5 9.2 6.4 L8.4 9.6 Q8 10.6 7 10.6 H1 Z" fill="none" stroke="#3b95dc" stroke-width="1.1"/><rect x="10" y="3.2" width="3" height="7.8" fill="#1a1a1a"/></svg>
<div class="t" style="left:457.6px;top:359px;font-size:12px;letter-spacing:-0.054px;">Kann begonnen werden</div>
<svg style="left:434px;top:379px" width="15" height="15" viewBox="0 0 15 15"><path d="M9.6 2.5 H2 Q0.6 2.5 0.6 4 V13 Q0.6 14.4 2 14.4 H10 Q11.4 14.4 11.4 13 V7.4" fill="#f9f9f9" stroke="#1a1a1a" stroke-width="1.2"/><path d="M2.5 0.7V3.8M4.5 0.7V3.8M6.5 0.7V3.8M8.5 0.7V3.8" stroke="#1a1a1a" stroke-width="1.1"/><path d="M2.4 12.4 L3.5 8.6 L12.1 0 L14.8 2.7 L6.2 11.3 Z" fill="#f9f9f9"/><path d="M3 11.8 L3.8 8.9 L12.1 0.6 L14.2 2.7 L5.9 11 Z" fill="#3b95dc"/><path d="M9.9 2.9 L11.9 4.9" stroke="#f9f9f9" stroke-width="0.8"/><path d="M6.6 8.2 L8.6 6.2" stroke="#d4e8f8" stroke-width="0.8"/><rect x="12" y="1.4" width="1.4" height="1.4" fill="#d4e8f8" transform="rotate(45 12.7 2.1)"/></svg>
<div class="t" style="left:457.6px;top:381px;font-size:12px;letter-spacing:-0.057px;">In Bearbeitung</div>
<svg style="left:434px;top:402px" width="16" height="16" viewBox="0 0 16 16"><circle cx="7" cy="7" r="5.9" fill="none" stroke="#1a1a1a" stroke-width="1.4"/><path d="M4.6 3.4 L7.4 7.4 L9.4 5.6" fill="none" stroke="#3b95dc" stroke-width="1.3"/><rect x="8.2" y="7.6" width="7" height="8" fill="#f9f9f9"/><rect x="8.8" y="8" width="2.6" height="7.4" fill="#3b95dc"/><rect x="12.4" y="8" width="2.6" height="7.4" fill="#3b95dc"/></svg>
<div class="t" style="left:457.6px;top:403px;font-size:12px;letter-spacing:0.086px;">Zurückgestellt</div>
<svg style="left:434px;top:424px" width="15" height="16" viewBox="0 0 15 16"><ellipse cx="4.6" cy="4" rx="4.4" ry="3.8" fill="#111"/><path d="M2 6.4 L1.6 9 L4.6 7.4 Z" fill="#111"/><ellipse cx="9.8" cy="10.6" rx="4.6" ry="4" fill="#111"/><path d="M11 13.6 L12.6 16 L13 13 Z" fill="#111"/><path d="M3.4 3 Q3.4 1.6 4.7 1.6 Q6 1.6 6 2.8 Q6 3.6 4.7 4.2 V4.9 M4.7 5.8 V6.6" fill="none" stroke="#fff" stroke-width="0.9"/><path d="M9.8 8 V11.2 M9.8 12.2 V13.2" stroke="#fff" stroke-width="1.1"/></svg>
<div class="t" style="left:457.6px;top:425px;font-size:12px;">Warte auf Rückmeldung</div>
<svg style="left:436px;top:447px" width="14" height="13" viewBox="0 0 14 13"><path d="M1 6.4 H3.4 L5.2 11 Q7 11.2 6.6 9 L6.2 7.2 H8.6 Q9.6 7 9.2 5.6 L8.4 2.4 Q8 1.4 7 1.4 H1 Z" fill="none" stroke="#3b95dc" stroke-width="1.1"/><rect x="9.6" y="1" width="3" height="7.8" fill="#1a1a1a"/></svg>
<div class="t" style="left:457.6px;top:447px;font-size:12px;letter-spacing:-0.073px;">Zurückgewiesen</div>
<div class="abs" style="left:459px;top:466px;width:174px;height:1px;background:#dcdcdc;"></div>
<svg style="left:434px;top:474px" width="15" height="14" viewBox="0 0 15 14"><rect x="1.5" y="7.5" width="8" height="6" fill="none" stroke="#b4b4b4" stroke-width="1"/><path d="M1 6 L4.8 10 L13.4 1.4" fill="none" stroke="#b6b6b6" stroke-width="2.7"/></svg>
<div class="t" style="left:457.6px;top:475px;font-size:12px;font-weight:bold;color:#a2a2a2;letter-spacing:-0.165px;">Erledigt</div>
<div class="abs" style="left:459px;top:494px;width:174px;height:1px;background:#dcdcdc;"></div>
<svg style="left:433px;top:503px" width="16" height="12" viewBox="0 0 16 12"><path d="M0.6 5.6 C3.2 -0.8 12.2 -0.8 14.8 5.6 C12.2 12 3.2 12 0.6 5.6 Z" fill="#fff" stroke="#1a1a1a" stroke-width="1.2"/><circle cx="7.7" cy="5.6" r="3.1" fill="#3b95dc"/><circle cx="7.7" cy="5.6" r="1.4" fill="#1a1a1a"/></svg>
<div class="t" style="left:457.6px;top:503px;font-size:12px;letter-spacing:-0.208px;">Testen</div>
<svg style="left:433px;top:524px" width="17" height="16" viewBox="0 0 17 16"><path d="M0.6 5.6 C3.2 -0.8 12.2 -0.8 14.8 5.6 C12.2 12 3.2 12 0.6 5.6 Z" fill="#fff" stroke="#1a1a1a" stroke-width="1.2"/><circle cx="7.7" cy="5.6" r="3.1" fill="#3b95dc"/><circle cx="7.7" cy="5.6" r="1.4" fill="#1a1a1a"/><path d="M11.6 7.6 L16 14.4 H7.2 Z" fill="#fff" stroke="#1a1a1a" stroke-width="0.9"/><path d="M11.6 10 V12.2 M11.6 13 V13.8" stroke="#3b95dc" stroke-width="1"/></svg>
<div class="t" style="left:457.6px;top:525px;font-size:12px;letter-spacing:-0.029px;">Test nicht bestanden</div>
<svg style="left:433px;top:546px" width="17" height="16" viewBox="0 0 17 16"><path d="M0.6 5.6 C3.2 -0.8 12.2 -0.8 14.8 5.6 C12.2 12 3.2 12 0.6 5.6 Z" fill="#fff" stroke="#1a1a1a" stroke-width="1.2"/><circle cx="7.7" cy="5.6" r="3.1" fill="#3b95dc"/><circle cx="7.7" cy="5.6" r="1.4" fill="#1a1a1a"/><path d="M5.4 9.4 L8.6 12.4 L15.4 6.4" fill="none" stroke="#94b652" stroke-width="2.2"/></svg>
<div class="t" style="left:457.6px;top:547px;font-size:12px;letter-spacing:-0.153px;">Test bestanden</div>
<svg style="left:433px;top:567px" width="16" height="14" viewBox="0 0 16 14"><path d="M7.6 1 L14.8 13.2 H0.6 Z" fill="#fff" stroke="#1a1a1a" stroke-width="1.1" stroke-linejoin="round"/><path d="M7.6 4.6 V9.2" stroke="#f8735d" stroke-width="1.6"/><circle cx="7.6" cy="11" r="0.9" fill="#f8735d"/></svg>
<div class="t" style="left:457.6px;top:569px;font-size:12px;letter-spacing:0.089px;">Problem</div>
<div class="abs" style="left:459px;top:588px;width:174px;height:1px;background:#dcdcdc;"></div>
<svg style="left:434px;top:596px" width="14" height="14" viewBox="0 0 14 14"><path d="M7.0 0.2 L9.1 4.6 L13.9 5.2 L10.4 8.6 L11.3 13.4 L7.0 11.1 L2.7 13.4 L3.6 8.6 L0.1 5.2 L4.9 4.6 Z" fill="#ffff8e" stroke="#ffff8e" stroke-width="0.8" stroke-linejoin="round"/></svg>
<div class="t" style="left:457.6px;top:597px;font-size:12px;letter-spacing:-0.121px;">(!) Daueraufgabe</div>
<svg style="left:434px;top:618px" width="14" height="14" viewBox="0 0 14 14"><path d="M7.0 0.2 L9.1 4.6 L13.9 5.2 L10.4 8.6 L11.3 13.4 L7.0 11.1 L2.7 13.4 L3.6 8.6 L0.1 5.2 L4.9 4.6 Z" fill="#94b652" stroke="#94b652" stroke-width="0.8" stroke-linejoin="round"/></svg>
<div class="t" style="left:457.6px;top:619px;font-size:12px;letter-spacing:-0.168px;">(!) Managed Service</div>
<svg style="left:434px;top:640px" width="14" height="14" viewBox="0 0 14 14"><path d="M7.0 0.2 L9.1 4.6 L13.9 5.2 L10.4 8.6 L11.3 13.4 L7.0 11.1 L2.7 13.4 L3.6 8.6 L0.1 5.2 L4.9 4.6 Z" fill="#f8735d" stroke="#f8735d" stroke-width="0.8" stroke-linejoin="round"/></svg>
<div class="t" style="left:457.6px;top:641px;font-size:12px;letter-spacing:0.337px;">Komplett</div>
<svg style="left:434px;top:662px" width="14" height="14" viewBox="0 0 14 14"><path d="M7.0 0.2 L9.1 4.6 L13.9 5.2 L10.4 8.6 L11.3 13.4 L7.0 11.1 L2.7 13.4 L3.6 8.6 L0.1 5.2 L4.9 4.6 Z" fill="#c9c9c9" stroke="#c9c9c9" stroke-width="0.8" stroke-linejoin="round"/></svg>
<div class="t" style="left:457.6px;top:663px;font-size:12px;letter-spacing:0.036px;">Unterschrift ben.</div>
<svg style="left:434px;top:690px" width="14" height="14" viewBox="0 0 14 14"><path d="M7.0 0.2 L9.1 4.6 L13.9 5.2 L10.4 8.6 L11.3 13.4 L7.0 11.1 L2.7 13.4 L3.6 8.6 L0.1 5.2 L4.9 4.6 Z" fill="#3b95dc" stroke="#3b95dc" stroke-width="0.8" stroke-linejoin="round"/></svg>
<div class="t" style="left:457.6px;top:691px;font-size:12px;letter-spacing:0.036px;">Anpassungen nötig</div>
<div class="abs" style="left:459px;top:682px;width:174px;height:1px;background:#dcdcdc;"></div>
<svg style="left:427px;top:307px" width="13" height="20" viewBox="0 0 13 20"><path d="M0.5 0.8 V16.6 L4.2 13 L6.8 19 L9 18 L6.4 12.2 H11.6 Z" fill="#fff" stroke="#000" stroke-width="1" stroke-linejoin="miter"/></svg>
</body>
</html>
